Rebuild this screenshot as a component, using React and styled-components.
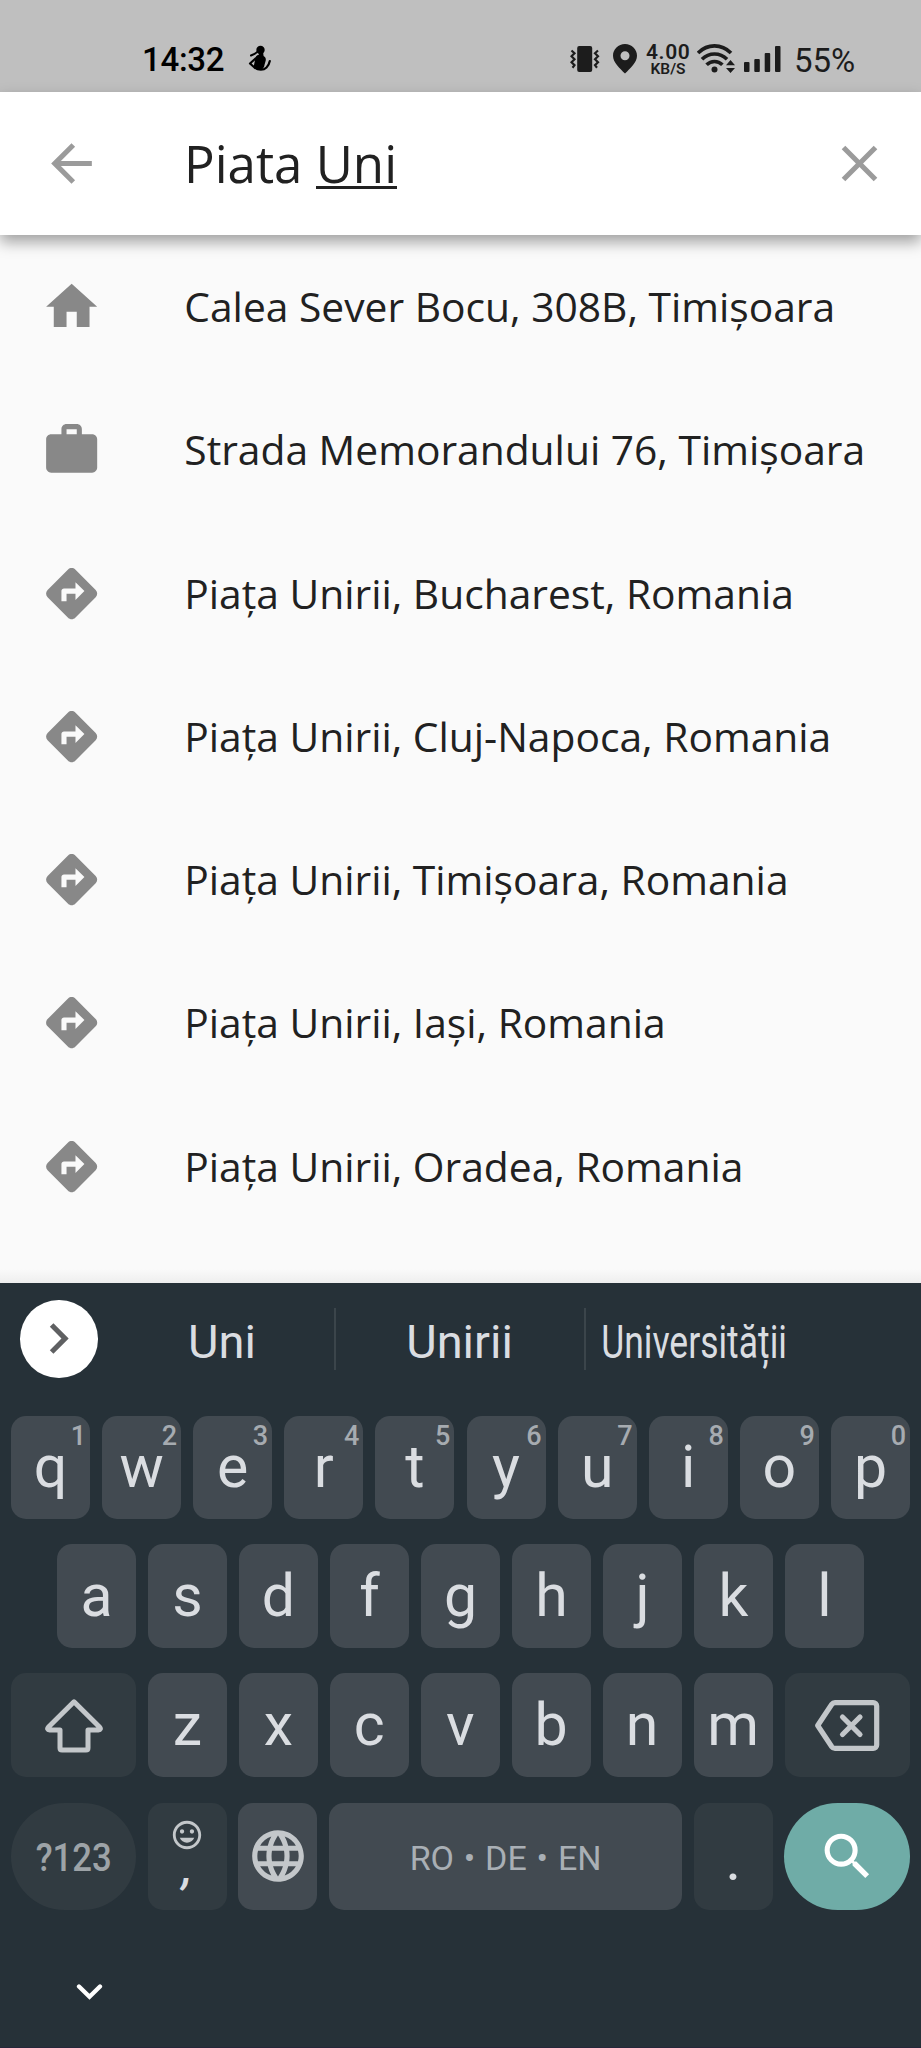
import React from "react";
import styled, { createGlobalStyle } from "styled-components";
import {
  MdArrowBack,
  MdClear,
  MdHome,
  MdWork,
  MdDirections,
  MdChevronRight,
  MdLanguage,
  MdOutlineMood,
  MdSearch,
} from "react-icons/md";

const GlobalStyle = createGlobalStyle`
  * { box-sizing: border-box; }
  body { margin: 0; background: #263138; }
`;

const Screen = styled.main`
  width: 921px;
  height: 2048px;
  display: flex;
  flex-direction: column;
  overflow: hidden;
  background: #fafafa;
  font-family: "Open Sans", "Noto Sans", sans-serif;
`;

/* Status bar */
const StatusBar = styled.header`
  height: 91.5px;
  flex: none;
  display: flex;
  align-items: flex-start;
  padding: 40px 64px 0 142px;
  background: #bfbfbf;
  color: #000;
  font-family: Roboto, sans-serif;
`;
const Clock = styled.span`
  width: 106px;
  font-size: 33px;
  line-height: 40px;
  font-weight: 500;
  letter-spacing: -0.3px;
`;
const StatusIcons = styled.div`
  margin-left: auto;
  display: flex;
  height: 40px;
  color: #1c1c1c;
`;
const StatusSvg = styled.svg`
  display: block;
  flex: none;
  margin-top: ${(p) => p.$drop || 0}px;
  margin-right: ${(p) => p.$gap || 0}px;
`;
const Speed = styled.div`
  width: 44px;
  margin-right: 7px;
  padding-top: 1px;
  text-align: center;
  font-weight: 600;
  font-size: 21px;
  line-height: 22px;
  letter-spacing: 0.6px;
  white-space: nowrap;
`;
const SpeedUnit = styled.div`
  font-size: 15.5px;
  line-height: 12px;
  letter-spacing: 0;
`;
const Battery = styled.span`
  width: 63px;
  font-size: 33px;
  line-height: 41px;
  white-space: nowrap;
`;

/* Search header */
const SearchBar = styled.div`
  position: relative;
  z-index: 1;
  height: 143.5px;
  flex: none;
  display: flex;
  align-items: center;
  padding: 0 31px 0 41px;
  background: #fff;
  color: #9b9b9b;
  box-shadow: 0 7px 14px rgba(0, 0, 0, 0.36);
  svg { flex: none; display: block; }
`;
const Query = styled.div`
  flex: 1;
  padding-left: 82px;
  font-size: 51px;
  line-height: 70px;
  color: #212121;
`;
const Composing = styled.span`
  border-bottom: 3px solid #212121;
  display: inline-block;
  line-height: 47px;
  height: 49px;
`;

/* Suggested places */
const PlaceList = styled.ul`
  flex: 1;
  margin: 0;
  padding: 0;
  list-style: none;
  background: linear-gradient(#fafafa calc(100% - 14px), #eeeeee);
`;
const Place = styled.li`
  height: 143.3px;
  display: flex;
  align-items: center;
  padding-left: 41px;
  color: #888;
  svg { flex: none; display: block; }
`;
const PlaceName = styled.span`
  padding-left: 82px;
  padding-bottom: 1.4px;
  font-size: 40.75px;
  line-height: 56px;
  white-space: nowrap;
  color: #212121;
`;

/* Keyboard */
const Keyboard = styled.section`
  height: 765.5px;
  flex: none;
  display: flex;
  flex-direction: column;
  background: #263138;
  color: #dadde1;
  font-family: Roboto, sans-serif;
`;
const Candidates = styled.div`
  height: 133px;
  flex: none;
  display: flex;
  align-items: flex-start;
  padding: 17.5px 0 0 20px;
`;
const Expand = styled.button`
  width: 77.5px;
  height: 77.5px;
  padding: 0;
  border: 0;
  border-radius: 50%;
  display: flex;
  align-items: center;
  justify-content: center;
  background: #fff;
  color: #5f6062;
`;
const Candidate = styled.div`
  width: ${(p) => p.$width}px;
  margin: 8px 0 0 ${(p) => p.$indent || 0}px;
  height: 62px;
  display: flex;
  align-items: center;
  justify-content: center;
  padding-top: 5px;
  border-left: ${(p) => (p.$divided ? "2px solid #3b454b" : "0")};
  font-size: 47px;
  line-height: 60px;
`;
const CandidateWord = styled.span`
  transform: scaleX(${(p) => p.$squeeze || 1});
`;
const KeyRow = styled.div`
  display: flex;
  justify-content: space-between;
  flex: none;
  height: ${(p) => p.$height || 103.5}px;
  padding: 0 ${(p) => p.$inset || 11}px;
  margin-bottom: ${(p) => p.$after}px;
`;
const Key = styled.button`
  position: relative;
  width: ${(p) => p.$width || 79}px;
  height: 100%;
  padding: 0 0 1px;
  border: 0;
  border-radius: ${(p) => (p.$round ? 54 : 15)}px;
  display: flex;
  align-items: center;
  justify-content: center;
  background: ${(p) => (p.$accent ? "#6faca7" : p.$dim ? "#313b41" : "#424a51")};
  color: ${(p) => (p.$accent ? "#fff" : p.$dim ? "#c3c7ca" : "#dadde1")};
  font-family: inherit;
  font-size: 59px;
  line-height: 1;
`;
const IconKey = styled(Key)`
  padding: 1px 0 0;
`;
const Hint = styled.span`
  position: absolute;
  top: 6px;
  right: 4px;
  font-size: 27px;
  line-height: 28px;
  font-weight: 500;
  color: #a6abb0;
`;
const SymbolsLabel = styled.span`
  padding-top: 5px;
  font-size: 39px;
  font-weight: 500;
  color: #9da3a7;
  transform: scaleX(0.89);
`;
const SpaceLabel = styled.span`
  padding-top: 3px;
  font-size: 34px;
  word-spacing: 1.4px;
  color: #a9afb5;
`;
const EmojiStack = styled.span`
  height: 100%;
  padding-top: 15px;
  display: flex;
  flex-direction: column;
  align-items: center;
  svg { display: block; }
`;
const Punctuation = styled.span`
  font-size: 50px;
  line-height: 50px;
  font-weight: 500;
  color: #dadde1;
`;
const Comma = styled(Punctuation)`
  margin-top: -10px;
  font-size: 46px;
  font-style: italic;
`;
const Period = styled(Punctuation)`
  padding-top: 14px;
`;
const NavBar = styled.nav`
  flex: 1;
  padding: 73px 0 0 76px;
  border-bottom: 1px solid #26263a;
`;

const places = [
  { icon: MdHome, name: "Calea Sever Bocu, 308B, Timișoara" },
  { icon: MdWork, name: "Strada Memorandului 76, Timișoara" },
  { icon: MdDirections, name: "Piața Unirii, Bucharest, Romania" },
  { icon: MdDirections, name: "Piața Unirii, Cluj-Napoca, Romania" },
  { icon: MdDirections, name: "Piața Unirii, Timișoara, Romania" },
  { icon: MdDirections, name: "Piața Unirii, Iași, Romania" },
  { icon: MdDirections, name: "Piața Unirii, Oradea, Romania" },
];

const FigureIcon = () => (
  <StatusSvg width="24" height="28" viewBox="0 0 24 28" $drop={5}>
    <circle cx="12.5" cy="5" r="4.2" fill="#000" />
    <path d="M11 7h4l.6 4c2 1 2.6 3 2 5l-1 3.5c-.4 3-2 5.5-5 5.5-4 0-6-2-5.6-5l1-5c.2-3 1.5-5 4-5.5z" fill="#000" />
    <path d="M7.5 13.500 2 18.500l4.500 4c4 3 9 3 12 0 1.800-1.700 2.800-4 3.300-6.500" fill="none" stroke="#000" strokeWidth="2.2" strokeLinecap="round" strokeLinejoin="round" />
    <path d="M3 10.500 6.500 9l4-3" fill="none" stroke="#000" strokeWidth="2" strokeLinecap="round" />
  </StatusSvg>
);

const VibrateIcon = () => (
  <StatusSvg width="30" height="40" viewBox="0 0 30 40" $gap={13}>
    <rect x="7.2" y="6" width="15" height="26" rx="2" fill="currentColor" />
    <path d="M1.5 10.500l3 2.700-3 3 3 3-3 3 3 3-2 2.500M28 10.500l-3 2.700 3 3-3 3 3 3-3 3 2 2.500" fill="none" stroke="currentColor" strokeWidth="2.2" />
  </StatusSvg>
);

const PinIcon = () => (
  <StatusSvg width="24" height="40" viewBox="0 0 24 40" $gap={9}>
    <path fillRule="evenodd" fill="currentColor" d="M12 4C5.300 4 0 9.200 0 15.700 0 22.500 7 28.500 12 33.500c5-5 12-11 12-17.800C24 9.200 18.700 4 12 4zm0 7.200a4.500 4.500 0 1 1 0 9 4.500 4.500 0 0 1 0-9z" />
  </StatusSvg>
);

const WifiIcon = () => (
  <StatusSvg width="38" height="40" viewBox="0 0 38 40" $gap={9}>
    <g fill="none" stroke="currentColor" strokeWidth="3.6">
      <path d="M1 13c9.500-9.500 23.500-9.500 33 0" />
      <path d="M5 19.300c7-7 18-7 25 0" />
      <path d="M9.600 24.800c4.500-4.500 11.300-4.500 15.800 0" />
    </g>
    <circle cx="17.5" cy="29.5" r="3" fill="currentColor" />
    <path d="M29 25.300h9L33.500 20zM29 28h9l-4.500 5z" fill="currentColor" />
  </StatusSvg>
);

const SignalIcon = () => (
  <StatusSvg width="37" height="40" viewBox="0 0 37 40" $gap={13} fill="currentColor">
    <rect x="0" y="22" width="5.5" height="10" rx="1" />
    <rect x="10.3" y="19" width="5.5" height="13" rx="1" />
    <rect x="20.7" y="13" width="5.5" height="19" rx="1" />
    <rect x="31" y="6" width="5.5" height="26" rx="1" />
  </StatusSvg>
);

const ShiftIcon = () => (
  <svg width="58" height="55" viewBox="0 0 58 55" fill="none" stroke="currentColor" strokeWidth="5" strokeLinejoin="round">
    <path d="M29 3.800 3.500 29c-1.600 1.600-.8 3 1 3H15v18c0 1.200.8 2 2 2h24c1.200 0 2-.8 2-2V32h10.500c1.800 0 2.600-1.400 1-3z" />
  </svg>
);

const DeleteIcon = () => (
  <svg width="65" height="51" viewBox="0 0 65 51" fill="none" stroke="currentColor" strokeWidth="5.2" strokeLinejoin="round" strokeLinecap="round">
    <path d="M20 2.600h38.200a3.500 3.500 0 0 1 3.500 3.500v38.800a3.500 3.500 0 0 1-3.500 3.500H20a4 4 0 0 1-3.200-1.700L2.700 25.500 16.800 4.300A4 4 0 0 1 20 2.600z" />
    <path d="M27.500 17l17.500 17.500M45 17 27.500 34.500" />
  </svg>
);

const HideIcon = () => (
  <svg width="27" height="18" viewBox="0 0 27 18" fill="none" stroke="#fff" strokeWidth="4.3" strokeLinecap="round">
    <path d="M3 3.500l10.500 10.300L24 3.500" />
  </svg>
);

export default function App() {
  return (
    <Screen>
      <GlobalStyle />
      <StatusBar>
        <Clock>14:32</Clock>
        <FigureIcon />
        <StatusIcons>
          <VibrateIcon />
          <PinIcon />
          <Speed>
            4.00
            <SpeedUnit>KB/S</SpeedUnit>
          </Speed>
          <WifiIcon />
          <SignalIcon />
          <Battery>55%</Battery>
        </StatusIcons>
      </StatusBar>

      <SearchBar>
        <MdArrowBack size={61} />
        <Query>
          Piata <Composing>Uni</Composing>
        </Query>
        <MdClear size={61} />
      </SearchBar>

      <PlaceList>
        {places.map(({ icon: Icon, name }) => (
          <Place key={name}>
            <Icon size={61.3} />
            <PlaceName>{name}</PlaceName>
          </Place>
        ))}
      </PlaceList>

      <Keyboard>
        <Candidates>
          <Expand aria-label="Expand">
            <MdChevronRight size={61} />
          </Expand>
          <Candidate $width={223} $indent={13}>
            <CandidateWord>Uni</CandidateWord>
          </Candidate>
          <Candidate $width={250} $divided>
            <CandidateWord>Unirii</CandidateWord>
          </Candidate>
          <Candidate $width={220} $divided>
            <CandidateWord $squeeze={0.755}>Universității</CandidateWord>
          </Candidate>
        </Candidates>

        <KeyRow $after={25}>
          {[..."qwertyuiop"].map((letter, i) => (
            <Key key={letter}>
              {letter}
              <Hint>{(i + 1) % 10}</Hint>
            </Key>
          ))}
        </KeyRow>
        <KeyRow $inset={57} $after={25.5}>
          {[..."asdfghjkl"].map((letter) => (
            <Key key={letter}>{letter}</Key>
          ))}
        </KeyRow>
        <KeyRow $height={104} $after={26}>
          <IconKey $width={125} $dim aria-label="Shift">
            <ShiftIcon />
          </IconKey>
          {[..."zxcvbnm"].map((letter) => (
            <Key key={letter}>{letter}</Key>
          ))}
          <IconKey $width={125.5} $dim aria-label="Delete">
            <DeleteIcon />
          </IconKey>
        </KeyRow>
        <KeyRow $height={107} $after={0}>
          <Key $width={125} $dim $round>
            <SymbolsLabel>?123</SymbolsLabel>
          </Key>
          <Key $dim>
            <EmojiStack>
              <MdOutlineMood size={34} />
              <Comma>,</Comma>
            </EmojiStack>
          </Key>
          <Key aria-label="Language">
            <MdLanguage size={62} color="#c3c7ca" />
          </Key>
          <Key $width={353}>
            <SpaceLabel>RO • DE • EN</SpaceLabel>
          </Key>
          <Key $dim>
            <Period>.</Period>
          </Key>
          <Key $width={125.5} $round $accent aria-label="Search">
            <MdSearch size={61} />
          </Key>
        </KeyRow>
        <NavBar>
          <HideIcon />
        </NavBar>
      </Keyboard>
    </Screen>
  );
}
